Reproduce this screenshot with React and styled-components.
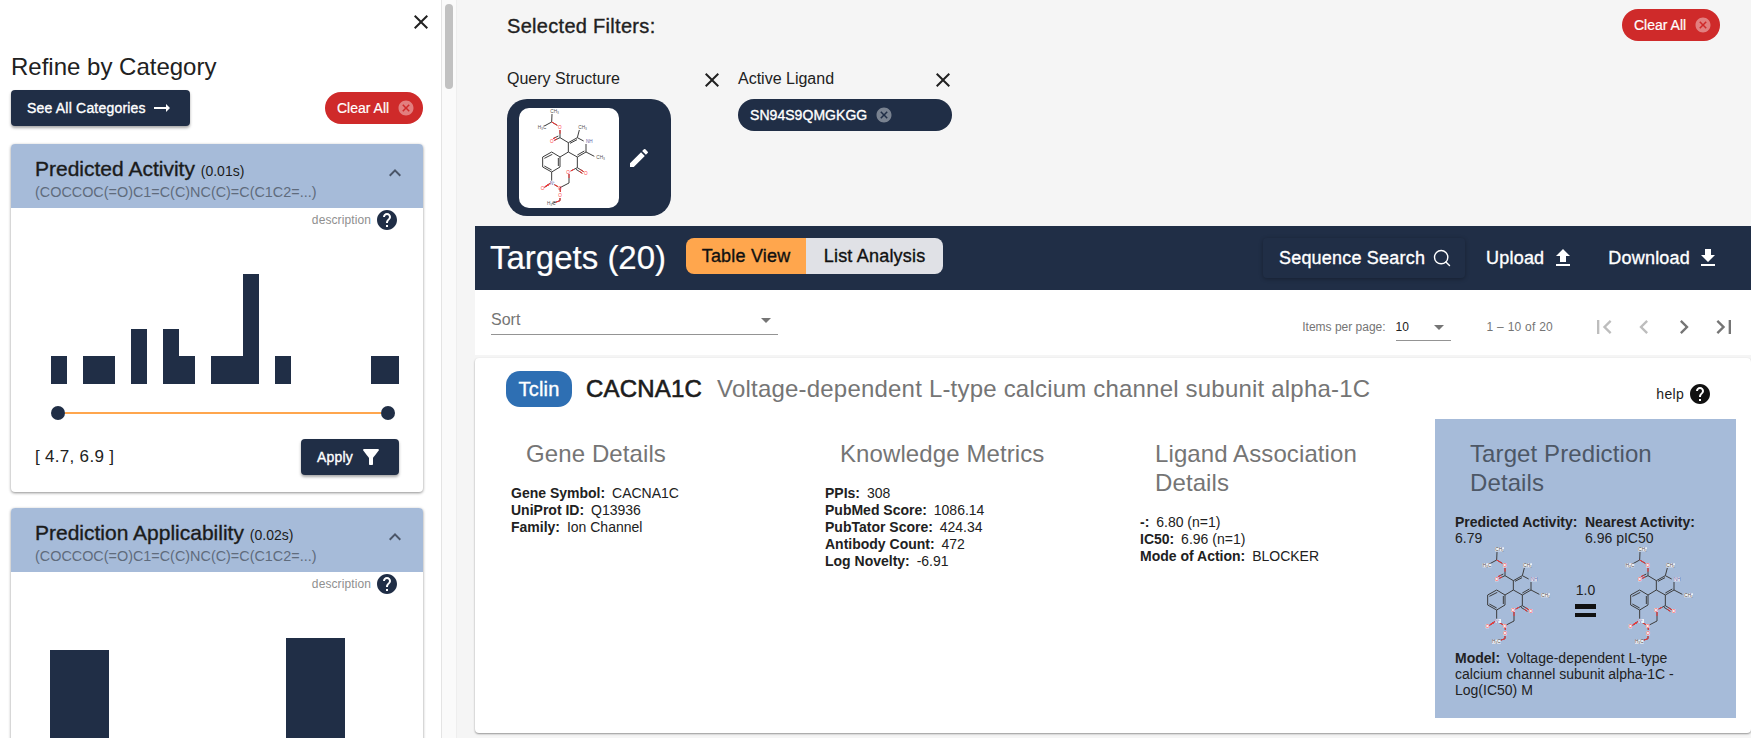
import React from 'react';
import styled, { createGlobalStyle, css } from 'styled-components';
import {
  MdClose,
  MdExpandLess,
  MdHelp,
  MdEdit,
  MdFileUpload,
  MdFileDownload,
  MdCancel,
  MdFilterAlt,
  MdArrowRightAlt,
  MdFirstPage,
  MdLastPage,
  MdChevronLeft,
  MdChevronRight,
  MdArrowDropDown,
} from 'react-icons/md';
import { Search } from 'lucide-react';

const navy = '#202e46';
const steel = '#a6bbd9';
const red = '#cf2a2a';
const orange = '#ffa64d';
const font = '"Liberation Sans", Arial, sans-serif';

// the page uses a medium weight that Liberation Sans does not have
const medium = css`
  font-weight: 400;
  -webkit-text-stroke: 0.35px currentColor;
  letter-spacing: 0.2px;
`;

const GlobalStyle = createGlobalStyle`
  html, body {
    margin: 0;
    height: 738px;
    overflow: hidden;
    background: #f5f5f5;
    font-family: ${font};
    color: #212121;
  }
`;

const Root = styled.div`
  display: flex;
  height: 738px;
  overflow: hidden;
`;

/* sidebar */

const Sidebar = styled.aside`
  width: 442px;
  height: 738px;
  flex: none;
  box-sizing: border-box;
  padding: 0 18px 0 11px;
  background: #fff;
  border-right: 1px solid #e4e4e4;
  overflow: hidden;
`;

const Track = styled.div`
  width: 15px;
  flex: none;
  padding: 4px 3px 0;
  box-sizing: border-box;
  background: #fafafa;
  border-right: 1px solid #eee;
`;

const Thumb = styled.div`
  width: 8px;
  height: 85px;
  border-radius: 4px;
  background: #c1c1c1;
`;

const CloseRow = styled.div`
  display: flex;
  justify-content: flex-end;
  height: 34px;
  padding-top: 10px;
  box-sizing: border-box;
  margin-right: -10px;
`;

const SideTitle = styled.h2`
  margin: 19px 0 9px;
  font-size: 24px;
  line-height: 28px;
  font-weight: 400;
`;

const SideActions = styled.div`
  display: flex;
  align-items: center;
  justify-content: space-between;
  height: 36px;
  margin-bottom: 18px;
`;

const NavyButton = styled.button`
  display: flex;
  align-items: center;
  gap: ${p => p.$gap}px;
  height: 36px;
  padding: 0 16px;
  border: 0;
  border-radius: 4px;
  background: ${navy};
  color: #fff;
  font-family: ${font};
  font-size: 14px;
  ${medium}
  box-shadow: 0 2px 3px rgba(0, 0, 0, 0.35);
`;

const ClearButton = styled.button`
  display: flex;
  align-items: center;
  justify-content: space-between;
  width: 98px;
  height: 32px;
  box-sizing: border-box;
  padding: 0 8px 0 12px;
  border: 0;
  border-radius: 16px;
  background: ${red};
  color: #fff;
  font-family: ${font};
  font-size: 14px;
  font-weight: 400;
  -webkit-text-stroke: 0.2px currentColor;

  svg {
    opacity: 0.4;
  }
`;

const Panel = styled.section`
  margin-bottom: 16px;
  background: #fff;
  border-radius: 4px;
  box-shadow: 0 1px 3px rgba(0, 0, 0, 0.45);
`;

const PanelHeader = styled.header`
  position: relative;
  height: 64px;
  padding: 13px 0 0 24px;
  box-sizing: border-box;
  background: ${steel};
  border-radius: 4px 4px 0 0;
`;

const PanelTitle = styled.div`
  font-size: 21px;
  line-height: 24px;
  color: #1b1b1b;
  ${medium}
  letter-spacing: 0;

  small {
    font-size: 14px;
    -webkit-text-stroke: 0;
  }
`;

const PanelSub = styled.div`
  margin-top: -1px;
  font-size: 14.4px;
  line-height: 20px;
  color: #5f6b7c;
`;

const Chevron = styled.span`
  position: absolute;
  top: 17px;
  right: 16px;
  display: flex;
  color: #4a5568;
`;

const DescRow = styled.div`
  display: flex;
  align-items: center;
  justify-content: flex-end;
  gap: 4px;
  height: 24px;
  padding-right: 24px;
  font-size: 12px;
  color: #8f8f8f;
  letter-spacing: 0.1px;
`;

const HelpIcon = styled(MdHelp)`
  color: ${p => p.$color || navy};
  flex: none;
`;

const Chart = styled.svg`
  display: block;
  fill: ${navy};
`;

const Slider = styled.div`
  display: flex;
  align-items: center;
  height: 14px;
  margin: 22px 28px 0 40px;
`;

const SliderThumb = styled.span`
  width: 14px;
  height: 14px;
  flex: none;
  border-radius: 50%;
  background: ${navy};
`;

const SliderLine = styled.span`
  flex: 1;
  height: 2px;
  background: ${orange};
`;

const PanelFooter = styled.div`
  display: flex;
  align-items: center;
  justify-content: space-between;
  padding: 19px 24px 17px;
`;

const RangeText = styled.span`
  font-size: 17px;
  letter-spacing: 0.3px;
`;

/* main */

const Main = styled.main`
  flex: 1;
  min-width: 0;
  margin-left: 18px;
`;

const Filters = styled.div`
  height: 226px;
  box-sizing: border-box;
  padding: 9px 31px 0 32px;
`;

const FiltersTop = styled.div`
  display: flex;
  align-items: flex-start;
  justify-content: space-between;
  height: 59px;
`;

const FiltersTitle = styled.h3`
  margin: 6px 0 0;
  font-size: 20px;
  line-height: 22px;
  ${medium}
  letter-spacing: 0.3px;
`;

const FilterGroups = styled.div`
  display: flex;
  gap: 14px;
`;

const FilterGroup = styled.div`
  width: 217px;
`;

const FilterLabel = styled.div`
  display: flex;
  align-items: center;
  justify-content: space-between;
  height: 24px;
  margin-bottom: 7px;
  font-size: 16px;
  line-height: 20px;
  color: #212121;

  span {
    margin-top: -3px;
  }
`;

const StructureCard = styled.div`
  display: flex;
  align-items: center;
  width: 164px;
  height: 117px;
  box-sizing: border-box;
  padding-left: 12px;
  gap: 8px;
  border-radius: 20px;
  background: ${navy};
  color: #fff;
`;

const StructureImage = styled.div`
  width: 100px;
  height: 100px;
  flex: none;
  border-radius: 10px;
  background: #fff;
  overflow: hidden;
`;

const Chip = styled.div`
  display: flex;
  align-items: center;
  gap: 8px;
  width: 214px;
  height: 32px;
  box-sizing: border-box;
  padding-left: 12px;
  border-radius: 16px;
  background: ${navy};
  color: #fff;
  font-size: 14px;
  ${medium}
  letter-spacing: 0.05px;

  svg {
    opacity: 0.4;
  }
`;

const TargetsBar = styled.div`
  display: flex;
  align-items: center;
  height: 64px;
  padding: 0 31px 0 15px;
  background: ${navy};
  color: #fff;
`;

const TargetsTitle = styled.h1`
  margin: 0 20px 0 0;
  font-size: 33px;
  font-weight: 400;
  line-height: 40px;
  -webkit-text-stroke: 0.2px currentColor;
`;

const Toggle = styled.div`
  display: flex;
  height: 36px;
  margin-bottom: 4px;
  border-radius: 8px;
  overflow: hidden;
`;

const ToggleItem = styled.span`
  display: flex;
  align-items: center;
  width: ${p => p.$width}px;
  box-sizing: border-box;
  justify-content: center;
  font-size: 18px;
  ${medium}
  color: #111;
  background: ${p => (p.$active ? orange : '#e0e1e6')};
`;

const BarActions = styled.div`
  display: flex;
  align-items: center;
  margin-left: auto;
`;

const BarButton = styled.span`
  display: flex;
  align-items: center;
  gap: ${p => p.$gap || 6}px;
  height: 40px;
  margin-left: ${p => p.$left}px;
  font-size: 18px;
  ${medium}
`;

const SearchButton = styled(BarButton)`
  gap: 7px;
  padding: 0 13px 0 16px;
  border-radius: 4px;
  box-shadow: 0 1px 4px rgba(0, 0, 0, 0.3);
`;

const Toolbar = styled.div`
  display: flex;
  align-items: flex-start;
  height: 65px;
  background: #fff;
`;

const SortSelect = styled.div`
  display: flex;
  align-items: center;
  justify-content: space-between;
  width: 287px;
  height: 28px;
  padding-top: 2px;
  margin: 14px 0 0 16px;
  border-bottom: 1px solid #949494;
  font-size: 16px;
  color: #757575;
`;

const Paginator = styled.div`
  display: flex;
  align-items: center;
  margin: 23px 0 0 auto;
  padding-right: 13px;
  font-size: 12px;
  color: #757575;
`;

const PageSelect = styled.div`
  display: flex;
  align-items: center;
  justify-content: space-between;
  width: 55px;
  height: 26px;
  margin: 0 36px 0 10px;
  border-bottom: 1px solid #949494;

  span {
    color: #212121;
  }
`;

const RangeLabel = styled.span`
  letter-spacing: 0.25px;
`;

const PageButtons = styled.div`
  display: flex;
  margin-left: 37px;
  gap: 12px;
`;

const PageButton = styled.span`
  display: flex;
  color: ${p => (p.$off ? '#bdbdbd' : '#757575')};
`;

const Card = styled.article`
  height: 375px;
  margin-top: 3px;
  box-sizing: border-box;
  padding: 13px 15px 0 31px;
  background: #fff;
  border-radius: 4px;
  box-shadow: 0 1px 2px rgba(0, 0, 0, 0.4);
`;

const CardHead = styled.div`
  position: relative;
  display: flex;
  align-items: center;
  height: 36px;
`;

const Badge = styled.span`
  display: flex;
  align-items: center;
  justify-content: center;
  width: 66px;
  height: 36px;
  margin-right: 14px;
  border-radius: 14px;
  background: #2e6fb3;
  color: #fff;
  font-size: 20px;
  ${medium}
`;

const Symbol = styled.span`
  margin-right: 15px;
  font-size: 24px;
  ${medium}
  -webkit-text-stroke: 0.6px currentColor;
  color: #1c1c1c;
`;

const FullName = styled.span`
  font-size: 24px;
  color: #757575;
  letter-spacing: 0.2px;
`;

const HelpLink = styled.span`
  position: absolute;
  top: 11px;
  right: 24px;
  display: flex;
  align-items: center;
  gap: 4px;
  font-size: 14px;
  letter-spacing: 0.3px;
  color: #1c1c1c;
`;

const Columns = styled.div`
  display: grid;
  grid-template-columns: 314px 315px 295px 301px;
  margin-top: 12px;
  margin-left: 5px;
`;

const Column = styled.div`
  ${p =>
    p.$highlight &&
    css`
      height: 299px;
      box-sizing: border-box;
      padding: 0 20px;
      background: ${steel};
    `}
`;

const ColumnTitle = styled.h4`
  margin: 20px 0 17px 15px;
  font-size: 24px;
  line-height: 29px;
  font-weight: 400;
  letter-spacing: 0.1px;
  color: ${p => p.$color || '#757575'};
`;

const Fact = styled.div`
  font-size: 14px;
  line-height: 17px;
  color: #212121;

  b {
    margin-right: 3px;
  }
`;

const Prediction = styled.div`
  display: grid;
  grid-template-columns: 130px 130px;
  font-size: 14px;
  line-height: 16px;

  b {
    display: block;
  }
`;

const Compare = styled.div`
  display: flex;
  align-items: center;
  height: 100px;
  margin-left: 9px;
`;

const Match = styled.div`
  display: flex;
  flex-direction: column;
  align-items: center;
  width: 43px;
  flex: none;
  margin-top: 7px;
  font-size: 14px;
  line-height: 16px;
`;

const EqualBars = styled.div`
  width: 21px;
  height: 13px;
  margin-top: 6px;
  box-sizing: border-box;
  border-top: 5px solid #111;
  border-bottom: 4px solid #111;
`;

const ModelText = styled.div`
  margin-top: 4px;
  font-size: 14px;
  line-height: 16px;

  b {
    margin-right: 3px;
  }
`;

/* drawings */

const BONDS = [
  [99, 18, 98, 42], [98, 42, 76, 54], [98, 42, 115, 52],
  [123, 66, 123, 89], [123, 89, 106, 97], [118, 84, 102, 92],
  [123, 89, 148, 104], [148, 104, 175, 89], [153, 106, 174, 95],
  [175, 89, 181, 66], [175, 89, 194, 99], [201, 108, 201, 132],
  [201, 132, 226, 145], [201, 132, 175, 147], [196, 129, 175, 141],
  [175, 147, 148, 132], [148, 132, 148, 104], [175, 147, 175, 179],
  [175, 179, 194, 191], [171, 184, 190, 196], [175, 179, 155, 189],
  [150, 198, 150, 225], [150, 225, 123, 239], [123, 239, 124, 252],
  [123, 270, 123, 278], [123, 278, 100, 286], [148, 132, 123, 147],
  [123, 147, 98, 132], [98, 132, 71, 147], [71, 147, 71, 177],
  [71, 177, 98, 192], [98, 192, 123, 177], [123, 177, 123, 147],
  [100, 139, 76, 151], [76, 174, 98, 186], [118, 174, 118, 150],
  [98, 192, 98, 218], [90, 230, 76, 238], [94, 226, 80, 234],
  [106, 230, 117, 236],
];

// the half of a bond that touches an oxygen is drawn red
const RED_BONDS = [
  [98, 42, 115, 52], [123, 66, 123, 77], [114, 93, 106, 97], [110, 88, 102, 92],
  [185, 185, 194, 191], [181, 190, 190, 196], [165, 184, 155, 189], [150, 198, 150, 210],
  [123, 270, 123, 278], [123, 278, 110, 283], [90, 230, 76, 238], [94, 226, 80, 234],
  [106, 230, 117, 236], [123, 239, 124, 252],
];

const ATOMS = [
  ['CH₃', 100, 10, '#555'], ['H₃C', 62, 58, '#555'], ['O', 123, 58, '#f44'],
  ['O', 99, 100, '#f44'], ['CH₃', 184, 58, '#555'], ['NH', 207, 100, '#66a'],
  ['CH₃', 238, 148, '#555'], ['O', 201, 195, '#f44'], ['O', 148, 192, '#f44'],
  ['N⁺', 99, 225, '#66a'], ['O', 71, 241, '#f44'], ['O', 123, 240, '#f44'],
  ['O', 124, 262, '#f44'], ['H₃C', 90, 287, '#555'],
];

const Molecule = ({ halo }) => (
  <svg width={100} height={100} viewBox="0 0 300 300">
    {BONDS.map(([x1, y1, x2, y2], i) => (
      <line key={i} x1={x1} y1={y1} x2={x2} y2={y2} stroke="#3c3c3c" strokeWidth="3" />
    ))}
    {RED_BONDS.map(([x1, y1, x2, y2], i) => (
      <line key={i} x1={x1} y1={y1} x2={x2} y2={y2} stroke="#f33" strokeWidth="3" />
    ))}
    {ATOMS.map(([label, x, y, fill], i) => (
      <g key={i}>
        {halo && <rect x={x - 6} y={y - 6} width={label.length * 8 + 2} height="12" fill="#f0f1f6" />}
        <text x={x - 6} y={y + 5} fontSize="14" fontFamily={font} fill={fill}>{label}</text>
      </g>
    ))}
  </svg>
);

const Histogram = ({ bars, height }) => (
  <Chart width="412" height={height} viewBox={`0 0 412 ${height}`}>
    {bars.map(([x, w, top], i) => (
      <rect key={i} x={x} y={top} width={w} height={height - top} />
    ))}
  </Chart>
);

const ACTIVITY_BARS = [
  [40, 16, 124], [72, 32, 124], [120, 16, 97], [152, 16, 97], [168, 16, 124],
  [200, 32, 124], [232, 16, 42], [264, 16, 124], [360, 28, 124],
];

const APPLICABILITY_BARS = [
  [39, 59, 54], [275, 59, 42],
];

const QUERY = '(COCCOC(=O)C1=C(C)NC(C)=C(C1C2=...)';

const Filter = ({ title, time, bars, chartHeight, children }) => (
  <Panel>
    <PanelHeader>
      <PanelTitle>
        {title} <small>({time})</small>
      </PanelTitle>
      <PanelSub>{QUERY}</PanelSub>
      <Chevron>
        <MdExpandLess size={24} />
      </Chevron>
    </PanelHeader>
    <DescRow>
      description
      <HelpIcon size={24} />
    </DescRow>
    <Histogram bars={bars} height={chartHeight} />
    {children}
  </Panel>
);

const ClearAll = () => (
  <ClearButton>
    Clear All
    <MdCancel size={18} />
  </ClearButton>
);

const App = () => (
  <Root>
    <GlobalStyle />
    <Sidebar>
      <CloseRow>
        <MdClose size={24} />
      </CloseRow>
      <SideTitle>Refine by Category</SideTitle>
      <SideActions>
        <NavyButton $gap={4}>
          See All Categories
          <MdArrowRightAlt size={24} />
        </NavyButton>
        <ClearAll />
      </SideActions>
      <Filter title="Predicted Activity" time="0.01s" bars={ACTIVITY_BARS} chartHeight={152}>
        <Slider>
          <SliderThumb />
          <SliderLine />
          <SliderThumb />
        </Slider>
        <PanelFooter>
          <RangeText>[ 4.7, 6.9 ]</RangeText>
          <NavyButton $gap={6}>
            Apply
            <MdFilterAlt size={24} />
          </NavyButton>
        </PanelFooter>
      </Filter>
      <Filter title="Prediction Applicability" time="0.02s" bars={APPLICABILITY_BARS} chartHeight={200} />
    </Sidebar>
    <Track>
      <Thumb />
    </Track>
    <Main>
      <Filters>
        <FiltersTop>
          <FiltersTitle>Selected Filters:</FiltersTitle>
          <ClearAll />
        </FiltersTop>
        <FilterGroups>
          <FilterGroup>
            <FilterLabel>
              <span>Query Structure</span>
              <MdClose size={24} />
            </FilterLabel>
            <StructureCard>
              <StructureImage>
                <Molecule />
              </StructureImage>
              <MdEdit size={24} />
            </StructureCard>
          </FilterGroup>
          <FilterGroup>
            <FilterLabel>
              <span>Active Ligand</span>
              <MdClose size={24} />
            </FilterLabel>
            <Chip>
              SN94S9QMGKGG
              <MdCancel size={18} />
            </Chip>
          </FilterGroup>
        </FilterGroups>
      </Filters>
      <TargetsBar>
        <TargetsTitle>Targets (20)</TargetsTitle>
        <Toggle>
          <ToggleItem $active $width={120}>Table View</ToggleItem>
          <ToggleItem $width={137}>List Analysis</ToggleItem>
        </Toggle>
        <BarActions>
          <SearchButton>
            Sequence Search
            <Search size={20} strokeWidth={1.7} />
          </SearchButton>
          <BarButton $left={21} $gap={7}>
            Upload
            <MdFileUpload size={24} />
          </BarButton>
          <BarButton $left={33}>
            Download
            <MdFileDownload size={24} />
          </BarButton>
        </BarActions>
      </TargetsBar>
      <Toolbar>
        <SortSelect>
          Sort
          <MdArrowDropDown size={24} />
        </SortSelect>
        <Paginator>
          Items per page:
          <PageSelect>
            <span>10</span>
            <MdArrowDropDown size={24} />
          </PageSelect>
          <RangeLabel>1 – 10 of 20</RangeLabel>
          <PageButtons>
            <PageButton $off><MdFirstPage size={28} /></PageButton>
            <PageButton $off><MdChevronLeft size={28} /></PageButton>
            <PageButton><MdChevronRight size={28} /></PageButton>
            <PageButton><MdLastPage size={28} /></PageButton>
          </PageButtons>
        </Paginator>
      </Toolbar>
      <Card>
        <CardHead>
          <Badge>Tclin</Badge>
          <Symbol>CACNA1C</Symbol>
          <FullName>Voltage-dependent L-type calcium channel subunit alpha-1C</FullName>
          <HelpLink>
            help
            <HelpIcon size={24} $color="#111" />
          </HelpLink>
        </CardHead>
        <Columns>
          <Column>
            <ColumnTitle>Gene Details</ColumnTitle>
            <Fact><b>Gene Symbol:</b> CACNA1C</Fact>
            <Fact><b>UniProt ID:</b> Q13936</Fact>
            <Fact><b>Family:</b> Ion Channel</Fact>
          </Column>
          <Column>
            <ColumnTitle>Knowledge Metrics</ColumnTitle>
            <Fact><b>PPIs:</b> 308</Fact>
            <Fact><b>PubMed Score:</b> 1086.14</Fact>
            <Fact><b>PubTator Score:</b> 424.34</Fact>
            <Fact><b>Antibody Count:</b> 472</Fact>
            <Fact><b>Log Novelty:</b> -6.91</Fact>
          </Column>
          <Column>
            <ColumnTitle>Ligand Association Details</ColumnTitle>
            <Fact><b>-:</b> 6.80 (n=1)</Fact>
            <Fact><b>IC50:</b> 6.96 (n=1)</Fact>
            <Fact><b>Mode of Action:</b> BLOCKER</Fact>
          </Column>
          <Column $highlight>
            <ColumnTitle $color="#4d5766">Target Prediction Details</ColumnTitle>
            <Prediction>
              <div><b>Predicted Activity:</b> 6.79</div>
              <div><b>Nearest Activity:</b> 6.96 pIC50</div>
            </Prediction>
            <Compare>
              <Molecule halo />
              <Match>
                1.0
                <EqualBars />
              </Match>
              <Molecule halo />
            </Compare>
            <ModelText>
              <b>Model:</b> Voltage-dependent L-type<br />
              calcium channel subunit alpha-1C -<br />
              Log(IC50) M
            </ModelText>
          </Column>
        </Columns>
      </Card>
    </Main>
  </Root>
);

export default App;
